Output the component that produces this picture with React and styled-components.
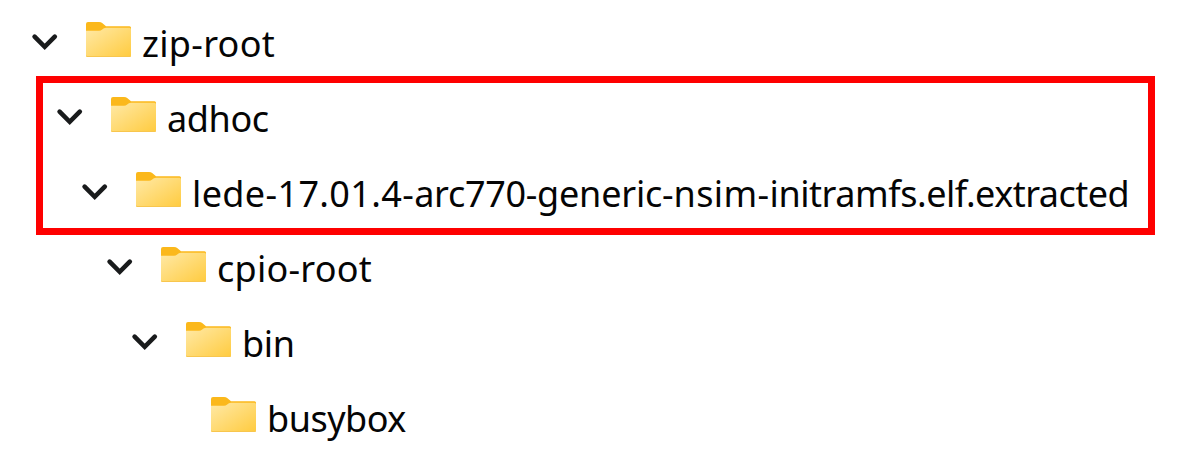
import React from "react";
import styled, { createGlobalStyle } from "styled-components";

const Global = createGlobalStyle`
  * { box-sizing: border-box; }
  body { margin: 0; background: #fff; }
`;

const Tree = styled.main`
  width: 1182px;
  height: 462px;
  overflow: hidden;
  padding-top: 2px;
  background: #fff;
  color: #050505;
  font-family: "Noto Sans", "Open Sans", sans-serif;
  font-size: 36px;
`;

const Row = styled.div`
  display: flex;
  align-items: center;
  height: 75px;
  padding-left: ${(p) => p.$indent}px;
`;

const Highlight = styled.section`
  width: 1119px;
  height: 159px;
  margin: -1px 0 -8px 36px;
  border: 7px solid #fe0000;
`;

const HighlightRows = styled.div`
  margin-top: -6px;
`;

const ChevronSlot = styled.span`
  display: flex;
  flex: none;
  width: 54px;
  height: 34px;
`;

const FolderSvg = styled.svg`
  display: block;
  flex: none;
  width: 47px;
  height: 37px;
`;

const Label = styled.span`
  flex: none;
  margin-left: 10px;
  padding-top: 8px;
  line-height: 50px;
  white-space: nowrap;
`;

const Part = styled.span`
  letter-spacing: ${(p) => p.$tracking}px;
`;

function Chevron() {
  return (
    <svg width="28" height="34" viewBox="0 0 28 34" fill="none">
      <path d="M3.6 13.7 13.7 23.8 23.8 13.7" stroke="#191b1c" strokeWidth="4.6" strokeLinecap="round" />
    </svg>
  );
}

function Folder() {
  return (
    <FolderSvg viewBox="0 0 47 37">
      <defs>
        <linearGradient id="folderFront" x1="0" y1="0" x2="1" y2="1">
          <stop offset="0" stopColor="#ffe9a6" />
          <stop offset="1" stopColor="#ffcb3f" />
        </linearGradient>
      </defs>
      <path d="M1 14V3q0-2 2-2h11q2 0 3.5 1.2L21 5.3H44.5q1.5 0 1.5 1.5v6Z" fill="#fbb81b" />
      <path d="M1 9.800H14q1.8 0 3.2-1.2l1.3-1q1.2-.9 2.700-.9H44.5q1.5 0 1.5 1.5V34.5q0 1.500-1.500 1.500h-42Q1 36 1 34.500Z" fill="url(#folderFront)" />
      <path d="M1 34q.4 1 1.5 1h42q1.100 0 1.500-1v.5q0 1.500-1.500 1.500h-42Q1 36 1 34.500Z" fill="#f8c64e" />
    </FolderSvg>
  );
}

function Item({ indent, parts, open = true }) {
  return (
    <Row $indent={indent}>
      <ChevronSlot>{open && <Chevron />}</ChevronSlot>
      <Folder />
      <Label>
        {parts.map(([text, tracking]) => (
          <Part key={text} $tracking={tracking}>{text}</Part>
        ))}
      </Label>
    </Row>
  );
}

const extracted = [
  ["lede-17.01.4-", 0.36],
  ["arc770-", -0.3],
  ["generic-", -0.2],
  ["nsim-", 0.4],
  ["initramfs.", -0.45],
  ["elf.extracted", -0.5],
];

export default function App() {
  return (
    <>
      <Global />
      <Tree>
        <Item indent={31} parts={[["zip-root", 0.3]]} />
        <Highlight>
          <HighlightRows>
            <Item indent={13} parts={[["adhoc", -0.4]]} />
            <Item indent={38} parts={extracted} />
          </HighlightRows>
        </Highlight>
        <Item indent={106} parts={[["cpio-root", 0.25]]} />
        <Item indent={131} parts={[["bin", -0.4]]} />
        <Item indent={156} parts={[["busybox", -0.5]]} open={false} />
      </Tree>
    </>
  );
}
